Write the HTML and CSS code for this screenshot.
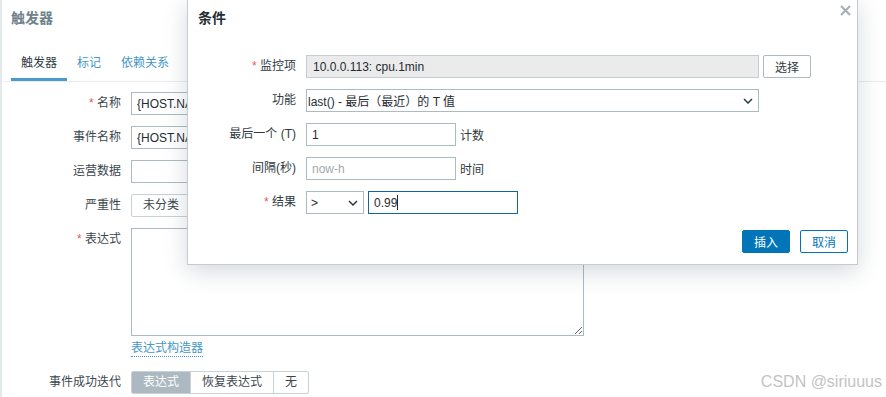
FILE: index.html
```html
<!DOCTYPE html>
<html lang="zh-CN">
<head>
    <meta charset="UTF-8">
    <meta name="viewport" content="width=device-width, initial-scale=1.0">
    <title>触发器</title>
    <link rel="stylesheet" href="styles.css">
</head>
<body>
    <div class="page">
        <h1 class="page-title">触发器</h1>

        <ul class="tabs">
            <li class="tab active">触发器</li>
            <li class="tab">标记</li>
            <li class="tab">依赖关系</li>
        </ul>

        <div class="form">
            <div class="form-row">
                <label class="form-label"><span class="req">*</span> 名称</label>
                <input class="inp w-long" type="text" value="{HOST.NA">
            </div>
            <div class="form-row">
                <label class="form-label">事件名称</label>
                <input class="inp w-long" type="text" value="{HOST.NA">
            </div>
            <div class="form-row">
                <label class="form-label">运营数据</label>
                <input class="inp w-long" type="text" value="">
            </div>
            <div class="form-row">
                <label class="form-label">严重性</label>
                <div class="seg seg-wide">
                    <span class="seg-item">未分类</span>
                </div>
            </div>
            <div class="form-row">
                <label class="form-label"><span class="req">*</span> 表达式</label>
                <div class="field">
                    <textarea class="expr"></textarea>
                    <a class="link" href="#">表达式构造器</a>
                </div>
            </div>
            <div class="form-row row-recovery">
                <label class="form-label">事件成功迭代</label>
                <div class="seg">
                    <span class="seg-item on">表达式</span>
                    <span class="seg-item">恢复表达式</span>
                    <span class="seg-item">无</span>
                </div>
            </div>
        </div>
    </div>

    <div class="modal">
        <div class="modal-head">
            <h2 class="modal-title">条件</h2>
            <span class="modal-close">
                <svg width="11" height="11" viewBox="0 0 11 11"><path d="M1 1L10 10M10 1L1 10" stroke="#a3afb6" stroke-width="2"/></svg>
            </span>
        </div>

        <div class="modal-body">
            <div class="m-row">
                <label class="m-label"><span class="req">*</span> 监控项</label>
                <div class="m-ctrl">
                    <input class="inp inp-ro w-full" type="text" value="10.0.0.113: cpu.1min" readonly>
                    <button class="btn-alt">选择</button>
                </div>
            </div>
            <div class="m-row">
                <label class="m-label">功能</label>
                <div class="m-ctrl">
                    <div class="select w-full">
                        <span class="sel-text">last() - 最后（最近）的 T 值</span>
                        <svg width="10" height="6" viewBox="0 0 10 6"><path d="M1 1L5 5L9 1" fill="none" stroke="#2f3b42" stroke-width="1.5"/></svg>
                    </div>
                </div>
            </div>
            <div class="m-row">
                <label class="m-label">最后一个 (T)</label>
                <div class="m-ctrl">
                    <input class="inp w-mid" type="text" value="1">
                    <span class="suffix">计数</span>
                </div>
            </div>
            <div class="m-row">
                <label class="m-label">间隔(秒)</label>
                <div class="m-ctrl">
                    <input class="inp w-mid" type="text" placeholder="now-h">
                    <span class="suffix">时间</span>
                </div>
            </div>
            <div class="m-row">
                <label class="m-label"><span class="req">*</span> 结果</label>
                <div class="m-ctrl">
                    <div class="select w-op">
                        <span class="sel-text">&gt;</span>
                        <svg width="10" height="6" viewBox="0 0 10 6"><path d="M1 1L5 5L9 1" fill="none" stroke="#2f3b42" stroke-width="1.5"/></svg>
                    </div>
                    <div class="inp inp-focus w-mid"><span>0.99</span><i class="caret"></i></div>
                </div>
            </div>
        </div>

        <div class="modal-foot">
            <button class="btn-main">插入</button>
            <button class="btn-line">取消</button>
        </div>
    </div>

    <div class="watermark">CSDN @siriuuus</div>
</body>
</html>
```

FILE: styles.css
```css
* {
    box-sizing: border-box;
}
body {
    margin: 0;
    font-family: "Liberation Sans", "Noto Sans CJK SC", Arial, sans-serif;
    font-size: 12px;
    color: #2f3b42;
    background: #fff;
    overflow: hidden;
    height: 397px;
}
.page {
    border-left: 2px solid #e3e8eb;
    padding-left: 9px;
    height: 397px;
}
.page-title {
    margin: 0;
    padding-top: 9px;
    font-size: 14px;
    line-height: 18px;
    font-weight: bold;
    color: #6f808a;
}
.tabs {
    list-style: none;
    display: flex;
    margin: 28px 0 0 -9px;
    padding: 0 0 0 9px;
    border-bottom: 1px solid #e9edef;
}
.tab {
    padding: 0 10px 7px;
    line-height: 16px;
    border-bottom: 3px solid transparent;
    color: #4696c6;
}
.tab.active {
    color: #2f3b42;
    border-bottom-color: #4a9bcb;
}
.form {
    margin-top: 10px;
}
.form-row {
    display: flex;
    gap: 10px;
    margin-bottom: 11px;
}
.form-label {
    width: 110px;
    flex-shrink: 0;
    text-align: right;
    line-height: 23px;
    color: #3b474e;
}
.req {
    color: #e45959;
}
.inp {
    height: 23px;
    border: 1px solid #acbbc2;
    padding: 0 5px;
    font: inherit;
    color: #1f2c33;
    background: #fff;
    outline: none;
}
.inp::placeholder {
    color: #a3a8ab;
}
.w-long {
    width: 453px;
}
.seg {
    display: flex;
    height: 23px;
    border: 1px solid #c8d1d6;
    border-radius: 2px;
    overflow: hidden;
}
.seg-wide {
    width: 300px;
}
.seg-wide .seg-item {
    border-right: 1px solid #c8d1d6;
}
.seg-item {
    padding: 0 11px;
    line-height: 21px;
    border-left: 1px solid #c8d1d6;
    color: #3b474e;
    white-space: nowrap;
}
.seg-item:first-child {
    border-left: none;
}
.seg-item.on {
    background: #acb9c1;
    color: #fff;
}
.field {
    display: flex;
    flex-direction: column;
    align-items: flex-start;
}
.expr {
    width: 453px;
    height: 108px;
    border: 1px solid #acbbc2;
    resize: both;
    margin: 0;
    display: block;
}
.link {
    margin-top: 4px;
    line-height: 16px;
    color: #4696c6;
    text-decoration: none;
    border-bottom: 1px dotted #4696c6;
}
.row-recovery {
    margin-top: 14px;
}

/* modal */
.modal {
    position: absolute;
    left: 187px;
    top: -1px;
    width: 671px;
    height: 266px;
    background: #fff;
    border: 1px solid #c3ccd2;
    box-shadow: 0 6px 22px rgba(40, 60, 75, 0.2);
}
.modal-head {
    position: relative;
    padding: 9px 10px 0;
}
.modal-title {
    margin: 0;
    font-size: 14px;
    line-height: 18px;
    font-weight: bold;
    color: #1f2c33;
}
.modal-close {
    position: absolute;
    top: 5px;
    right: 6px;
    display: flex;
}
.modal-body {
    padding: 28px 10px 0;
}
.m-row {
    display: flex;
    align-items: center;
    gap: 10px;
    margin-bottom: 11px;
}
.m-label {
    width: 98px;
    flex-shrink: 0;
    text-align: right;
    line-height: 23px;
    color: #2f3b42;
}
.m-ctrl {
    display: flex;
    align-items: center;
    gap: 4px;
}
.inp-ro {
    background: #ebebeb;
    border-color: #c4cdd2;
    padding-left: 6px;
}
.w-full {
    width: 453px;
}
.w-mid {
    width: 150px;
}
.select {
    height: 23px;
    border: 1px solid #acbbc2;
    display: flex;
    align-items: center;
    padding: 0 5px 0 1px;
    color: #1f2c33;
}
.sel-text {
    flex: 1;
}
.w-op {
    width: 58px;
    padding-left: 4px;
}
.inp-focus {
    border-color: #15649b;
    display: flex;
    align-items: center;
}
.caret {
    display: block;
    width: 1px;
    height: 15px;
    background: #1f2c33;
}
.suffix {
    color: #2f3b42;
}
.btn-alt {
    width: 48px;
    height: 23px;
    border: 1px solid #acbbc2;
    border-radius: 2px;
    background: #fff;
    font: inherit;
    color: #2f3b42;
}
.modal-foot {
    display: flex;
    justify-content: flex-end;
    gap: 10px;
    padding: 5px 9px 0;
}
.btn-main,
.btn-line {
    width: 48px;
    height: 23px;
    border-radius: 2px;
    font: inherit;
    padding: 0;
}
.btn-main {
    background: #0275b8;
    border: 1px solid #0275b8;
    color: #fff;
}
.btn-line {
    background: #fff;
    border: 1px solid #0275b8;
    color: #0275b8;
}
.watermark {
    position: absolute;
    right: 4px;
    bottom: 6px;
    font-size: 16px;
    line-height: 18px;
    color: #c3c3c3;
}
```
